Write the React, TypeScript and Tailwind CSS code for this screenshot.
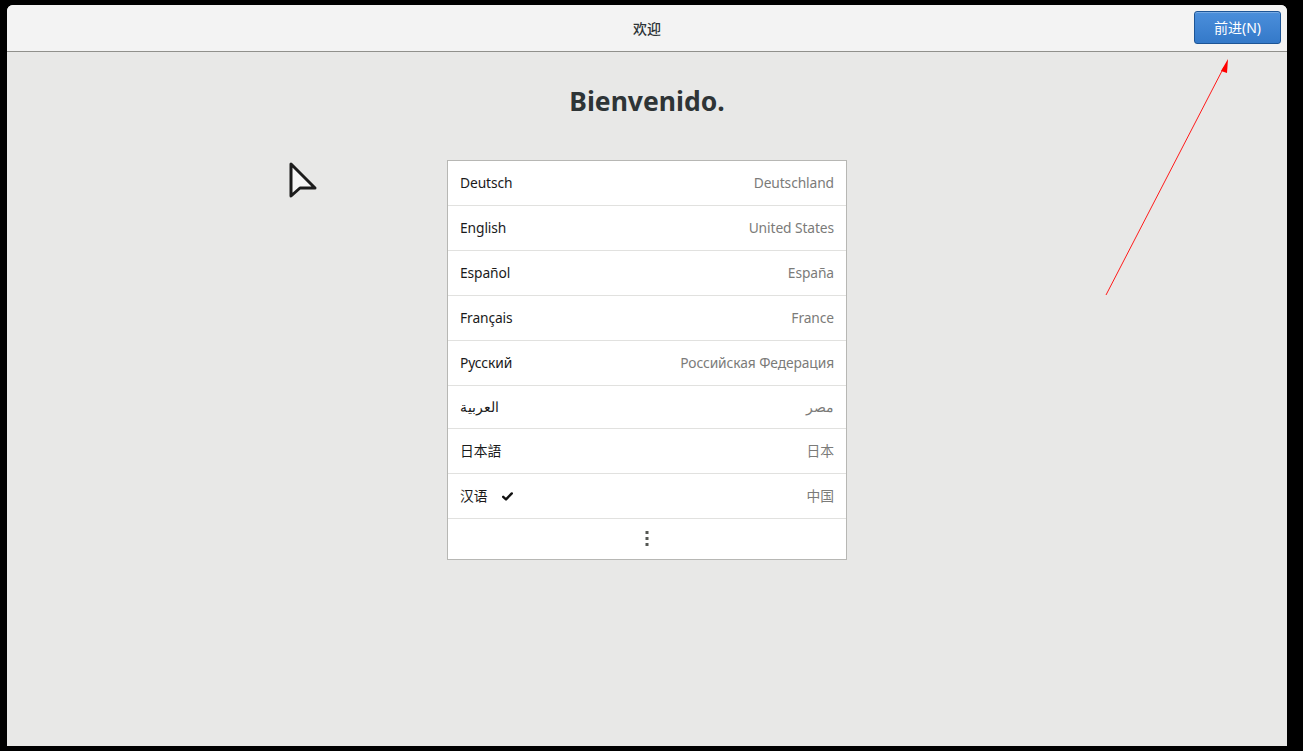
import React from 'react';

const languages = [
  { name: 'Deutsch', region: 'Deutschland' },
  { name: 'English', region: 'United States' },
  { name: 'Español', region: 'España' },
  { name: 'Français', region: 'France' },
  { name: 'Русский', region: 'Российская Федерация' },
  { name: 'العربية', region: 'مصر', short: true },
  { name: '日本語', region: '日本' },
  { name: '汉语', region: '中国', selected: true },
];

const font = { fontFamily: '"Noto Sans", "Noto Sans CJK SC", sans-serif' };

function LanguageRow({
  name,
  region,
  selected,
  short,
}: {
  name: string;
  region: string;
  selected?: boolean;
  short?: boolean;
}) {
  return (
    <div
      className={`flex items-center justify-between border-b border-[#e1e1df] px-3 text-[13.8px] tracking-[-0.1px] ${
        short ? 'h-[43px]' : 'h-[45px]'
      }`}
    >
      <div className="flex items-center text-[#1a1a1a]">
        <span>{name}</span>
        {selected && (
          <svg className="ml-[15px] mt-[1px]" width="11" height="9" viewBox="0 0 11 9">
            <path d="M1.2 4.8 L4 7.4 L9.8 1.4" fill="none" stroke="#111" strokeWidth="2.4" strokeLinecap="round" strokeLinejoin="round" />
          </svg>
        )}
      </div>
      <span className="text-[#7b7b79]">{region}</span>
    </div>
  );
}

export default function App() {
  return (
    <div className="relative w-[1303px] h-[751px] bg-black pt-[5px] pl-[7px]" style={font}>
      <div className="w-[1280px] h-[741px] rounded-t-[6px] overflow-hidden flex flex-col bg-[#e8e8e7]">
        <header className="relative h-[47px] shrink-0 bg-[#f3f3f3] border-b border-[#90908c] flex items-center justify-center">
          <span className="text-[14px] font-medium text-[#2e3436]">欢迎</span>
          <button className="absolute right-[6px] top-[6px] w-[87px] h-[33px] rounded-[3px] border border-[#1d5596] bg-gradient-to-b from-[#4b8fdb] to-[#3479c9] text-white text-[14px] shadow-[inset_0_1px_0_rgba(255,255,255,0.25)]">
            前进(N)
          </button>
        </header>

        <main className="flex-1 flex flex-col items-center">
          <h1 className="mt-[30px] text-[26.5px] leading-[38px] font-bold text-[#2e3436]">
            Bienvenido.
          </h1>
          <div className="mt-[40px] w-[400px] bg-white border border-[#b7b7b4]">
            {languages.map((l) => (
              <LanguageRow key={l.name} {...l} />
            ))}
            <div className="h-[40px] flex items-center justify-center">
              <svg width="4" height="16" viewBox="0 0 4 16">
                <rect x="0.5" y="0" width="3" height="3" fill="#555753" />
                <rect x="0.5" y="6" width="3" height="3" fill="#555753" />
                <rect x="0.5" y="12" width="3" height="3" fill="#555753" />
              </svg>
            </div>
          </div>
        </main>
      </div>

      {/* mouse pointer */}
      <svg className="absolute left-[287px] top-[161px]" width="32" height="40" viewBox="0 0 32 40">
        <path d="M4 3 L4 35 L13 27 L28 27 Z" fill="#f6f6f6" stroke="#1c1c1c" strokeWidth="3" strokeLinejoin="round" />
      </svg>

      {/* red annotation arrow */}
      <svg className="absolute left-0 top-0 pointer-events-none" width="1303" height="751">
        <line x1="1106" y1="295" x2="1224" y2="67" stroke="#ff1a1a" strokeWidth="1" />
        <polygon points="1228,59 1221,71 1227,73" fill="#ff0000" />
      </svg>
    </div>
  );
}
